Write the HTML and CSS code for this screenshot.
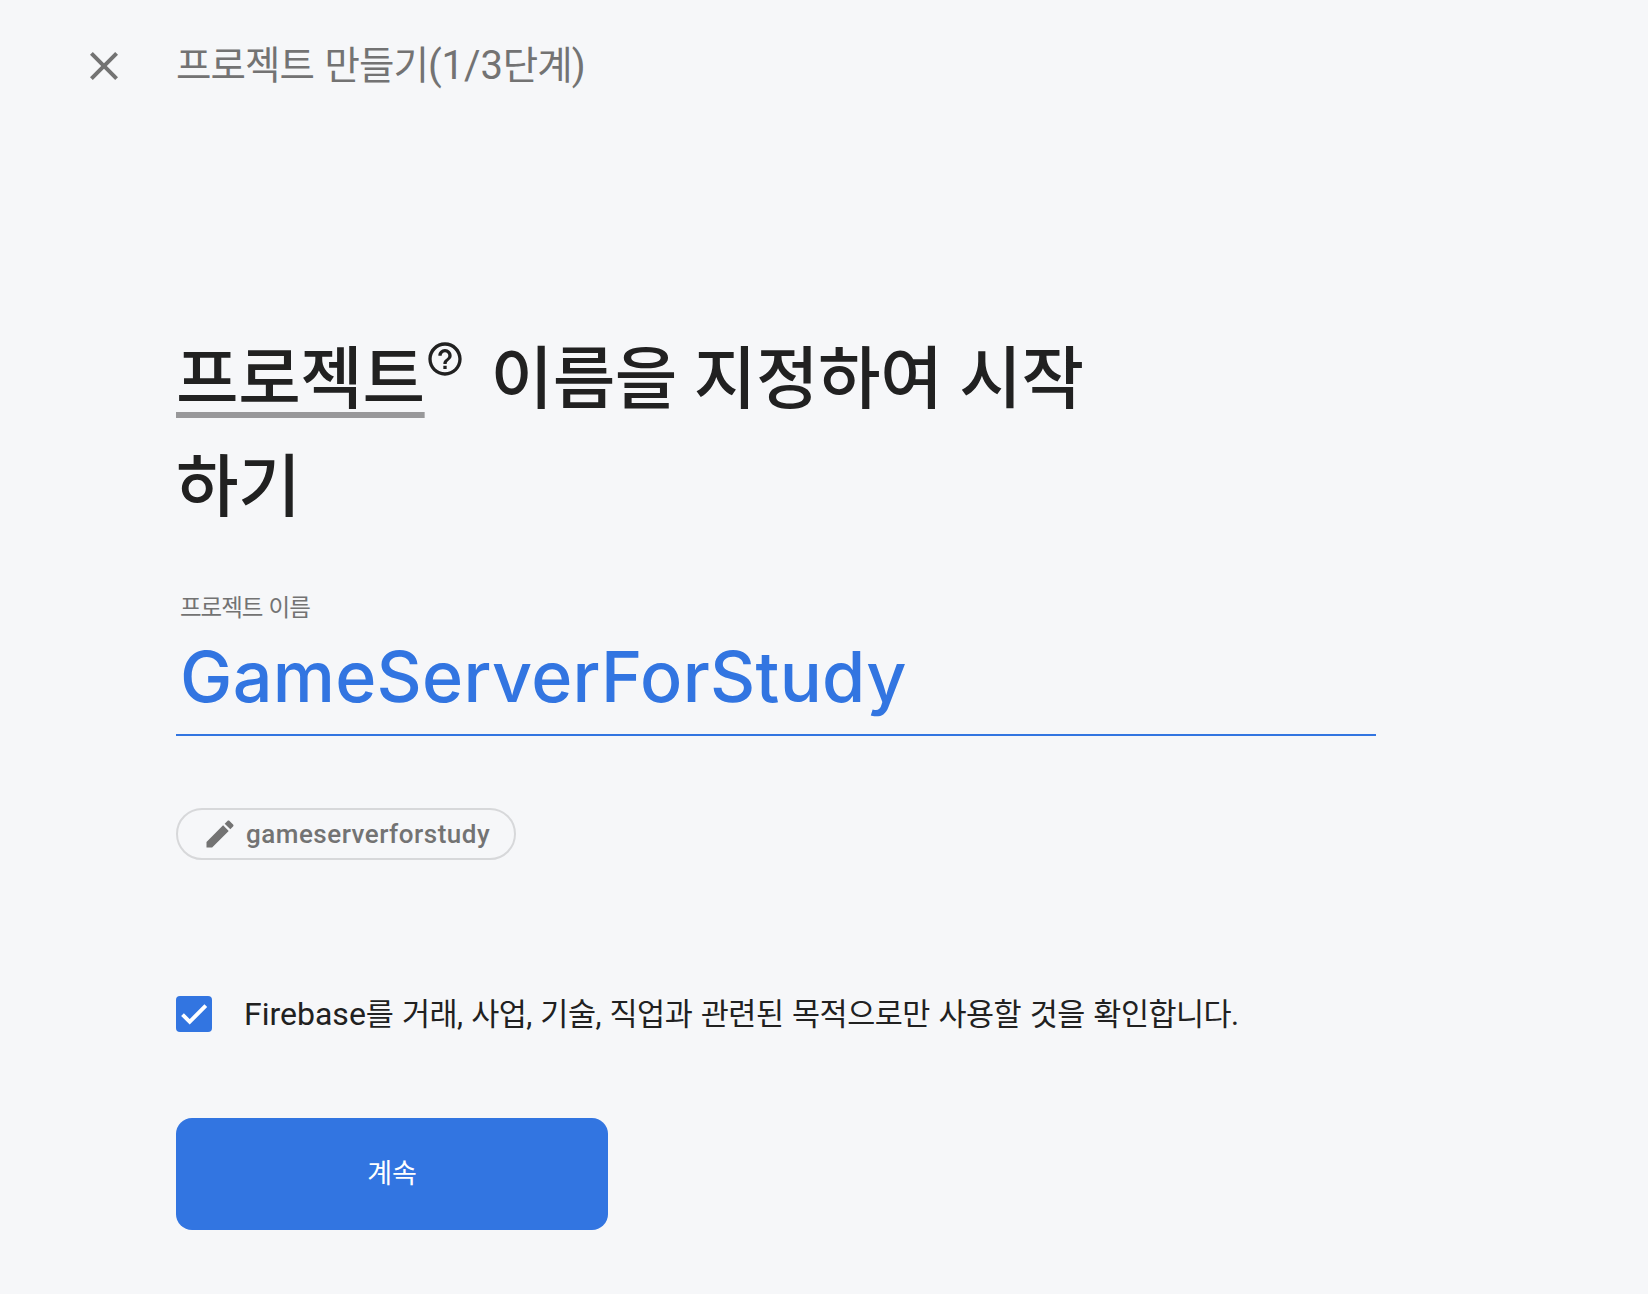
FILE: index.html
```html
<!DOCTYPE html>
<html lang="ko">
<head>
    <meta charset="UTF-8">
    <meta name="viewport" content="width=device-width, initial-scale=1.0">
    <title>프로젝트 만들기</title>
    <link rel="stylesheet" href="styles.css">
</head>
<body>
    <header class="header">
        <button class="close-button" aria-label="닫기">
            <svg viewBox="0 0 24 24"><path d="M19 6.41L17.59 5 12 10.59 6.41 5 5 6.41 10.59 12 5 17.59 6.41 19 12 13.41 17.59 19 19 17.59 13.41 12z"/></svg>
        </button>
        <div class="header-title">프로젝트 만들기<span class="latin">(1/3</span>단계<span class="latin">)</span></div>
    </header>

    <main class="content">
        <h1 class="heading"><span class="term">프로젝트</span><svg class="help-icon" viewBox="0 0 24 24"><path d="M11 18h2v-2h-2v2zm1-16C6.48 2 2 6.48 2 12s4.48 10 10 10 10-4.48 10-10S17.52 2 12 2zm0 18c-4.41 0-8-3.59-8-8s3.59-8 8-8 8 3.59 8 8-3.59 8-8 8zm0-14c-2.21 0-4 1.79-4 4h2c0-1.1.9-2 2-2s2 .9 2 2c0 2-3 1.75-3 5h2c0-2.25 3-2.5 3-5 0-2.21-1.79-4-4-4z"/></svg> 이름을 지정하여 시작하기</h1>

        <label class="field-label" for="project-name">프로젝트 이름</label>
        <input class="field-input" id="project-name" type="text" value="GameServerForStudy" spellcheck="false">

        <button class="project-id">
            <svg viewBox="0 0 24 24"><path d="M3 17.25V21h3.75L17.81 9.94l-3.75-3.75L3 17.25zM20.71 7.04c.39-.39.39-1.02 0-1.41l-2.34-2.34c-.39-.39-1.02-.39-1.41 0l-1.83 1.83 3.75 3.75 1.83-1.83z"/></svg>
            <span>gameserverforstudy</span>
        </button>

        <div class="confirm">
            <span class="checkbox" role="checkbox" aria-checked="true">
                <svg viewBox="0 0 36 36"><path d="M6.5 18.6L13.7 25.8 29.8 9.7"/></svg>
            </span>
            <span class="confirm-text"><span class="latin">Firebase</span>를 거래, 사업, 기술, 직업과 관련된 목적으로만 사용할 것을 확인합니다.</span>
        </div>

        <button class="continue-button">계속</button>
    </main>
</body>
</html>
```
FILE: styles.css
```css
* {
    box-sizing: border-box;
}
body {
    margin: 0;
    background-color: #f6f7f9;
    color: #212121;
    font-family: "Noto Sans CJK KR", sans-serif;
}
button {
    font-family: inherit;
    border: none;
    padding: 0;
    background: none;
    cursor: pointer;
}
svg {
    display: block;
    fill: currentColor;
}
.latin {
    font-family: Roboto, sans-serif;
    letter-spacing: 0;
}

/* Header */
.header {
    display: flex;
    align-items: center;
    height: 132px;
    padding-left: 80px;
    color: #737373;
}
.close-button {
    width: 48px;
    height: 48px;
    margin-right: 48px;
    color: #737373;
}
.close-button svg {
    width: 48px;
    height: 48px;
}
.header-title {
    padding-bottom: 5px;
    font-size: 38.5px;
    line-height: 56px;
    letter-spacing: -0.9px;
    word-spacing: 0.5px;
}
.header-title .latin {
    font-size: 40px;
    letter-spacing: -0.1px;
}

/* Form */
.content {
    width: 1200px;
    margin-left: 176px;
    padding-top: 188px;
}
.heading {
    max-width: 924px;
    margin: 0;
    font-size: 68px;
    font-weight: 500;
    line-height: 108px;
    letter-spacing: -0.4px;
    word-spacing: -1.8px;
}
.term {
    text-decoration: underline #98989a 6px;
    text-underline-offset: 9px;
    text-decoration-skip-ink: none;
}
.help-icon {
    display: inline-block;
    width: 40px;
    height: 40px;
    margin-right: 9px;
    vertical-align: 24px;
}
.field-label {
    display: block;
    margin-top: 53px;
    padding-left: 4px;
    color: #737373;
    font-size: 23.5px;
    line-height: 34px;
    letter-spacing: -1px;
    word-spacing: 0.5px;
}
.field-input {
    display: block;
    width: 100%;
    height: 113px;
    padding: 0 4px 4px;
    border: none;
    border-bottom: 2px solid #3275e1;
    outline: none;
    background: none;
    color: #3275e1;
    font-family: Inter, sans-serif;
    font-size: 70px;
    font-weight: 500;
    letter-spacing: 0.3px;
}
.project-id {
    display: flex;
    align-items: center;
    width: 340px;
    height: 52px;
    margin-top: 72px;
    padding-left: 24px;
    border: 2px solid #d7d8da;
    border-radius: 26px;
    color: #737373;
    font-family: Roboto, sans-serif;
    font-size: 26px;
    font-weight: 500;
    letter-spacing: 0.5px;
}
.project-id svg {
    width: 36px;
    height: 36px;
    margin-right: 8px;
}
.confirm {
    display: flex;
    align-items: center;
    height: 48px;
    margin-top: 130px;
}
.checkbox {
    width: 36px;
    height: 36px;
    margin-right: 32px;
    border-radius: 4px;
    background-color: #3275e1;
}
.checkbox svg {
    width: 36px;
    height: 36px;
    fill: none;
    stroke: #fff;
    stroke-width: 3.9;
}
.confirm-text {
    font-family: Roboto, "Noto Sans CJK KR", sans-serif;
    font-size: 30.5px;
    line-height: 46px;
    letter-spacing: -0.5px;
    word-spacing: 1.5px;
    white-space: nowrap;
}
.confirm-text .latin {
    font-size: 32px;
    letter-spacing: 0;
}
.continue-button {
    display: block;
    width: 432px;
    height: 112px;
    margin-top: 80px;
    padding-bottom: 5px;
    border-radius: 16px;
    background-color: #3275e1;
    color: #fff;
    font-size: 27px;
    font-weight: 400;
}
```
